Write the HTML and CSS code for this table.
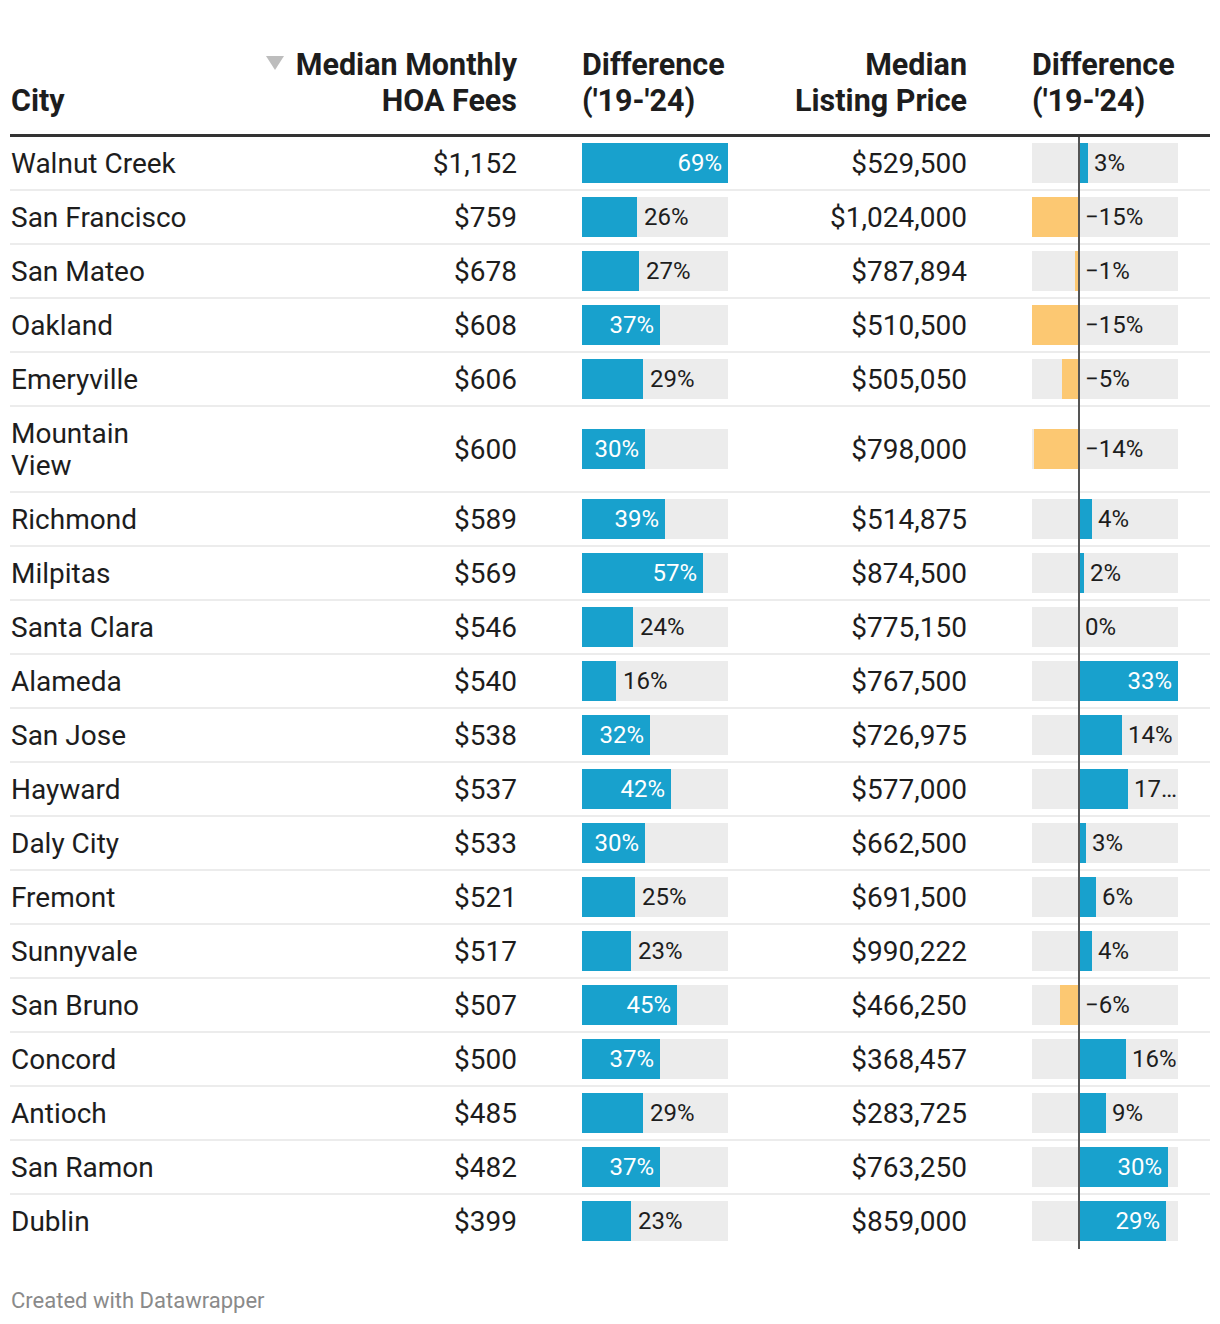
FILE: index.html
```html
<!DOCTYPE html>
<html>
<head>
<meta charset="utf-8">
<link rel="stylesheet" href="styles.css">
</head>
<body>
<div class="chart">
<table class="dw">
<colgroup><col class="c-city"><col class="c-hoa"><col class="c-bar"><col class="c-price"><col class="c-div"></colgroup>
<thead>
<tr>
<th class="th-city">City</th>
<th class="th-num"><svg class="sort" width="18" height="14" viewBox="0 0 18 14"><polygon points="0,0 18,0 9,14" fill="#bdbdbd"/></svg>Median Monthly<br>HOA Fees</th>
<th class="th-bar">Difference<br>('19-'24)</th>
<th class="th-num">Median<br>Listing Price</th>
<th class="th-bar">Difference<br>('19-'24)</th>
</tr>
</thead>
<tbody>
<tr><td class="city">Walnut Creek</td><td class="num">$1,152</td><td class="barcell"><div class="track"><div class="bar in" style="width:146px"><span class="lbl">69%</span></div></div></td><td class="num">$529,500</td><td class="divcell"><div class="track2"><div class="neg"></div><div class="pos"><div class="pbar" style="width:9px"></div><span class="lbl">3%</span></div></div></td></tr>
<tr><td class="city">San Francisco</td><td class="num">$759</td><td class="barcell"><div class="track"><div class="bar" style="width:55px"></div><span class="lbl">26%</span></div></td><td class="num">$1,024,000</td><td class="divcell"><div class="track2"><div class="neg"><div class="nbar" style="width:47px"></div></div><div class="pos"><span class="lbl">−15%</span></div></div></td></tr>
<tr><td class="city">San Mateo</td><td class="num">$678</td><td class="barcell"><div class="track"><div class="bar" style="width:57px"></div><span class="lbl">27%</span></div></td><td class="num">$787,894</td><td class="divcell"><div class="track2"><div class="neg"><div class="nbar" style="width:4px"></div></div><div class="pos"><span class="lbl">−1%</span></div></div></td></tr>
<tr><td class="city">Oakland</td><td class="num">$608</td><td class="barcell"><div class="track"><div class="bar in" style="width:78px"><span class="lbl">37%</span></div></div></td><td class="num">$510,500</td><td class="divcell"><div class="track2"><div class="neg"><div class="nbar" style="width:47px"></div></div><div class="pos"><span class="lbl">−15%</span></div></div></td></tr>
<tr><td class="city">Emeryville</td><td class="num">$606</td><td class="barcell"><div class="track"><div class="bar" style="width:61px"></div><span class="lbl">29%</span></div></td><td class="num">$505,050</td><td class="divcell"><div class="track2"><div class="neg"><div class="nbar" style="width:17px"></div></div><div class="pos"><span class="lbl">−5%</span></div></div></td></tr>
<tr><td class="city">Mountain View</td><td class="num">$600</td><td class="barcell"><div class="track"><div class="bar in" style="width:63px"><span class="lbl">30%</span></div></div></td><td class="num">$798,000</td><td class="divcell"><div class="track2"><div class="neg"><div class="nbar" style="width:45px"></div></div><div class="pos"><span class="lbl">−14%</span></div></div></td></tr>
<tr><td class="city">Richmond</td><td class="num">$589</td><td class="barcell"><div class="track"><div class="bar in" style="width:83px"><span class="lbl">39%</span></div></div></td><td class="num">$514,875</td><td class="divcell"><div class="track2"><div class="neg"></div><div class="pos"><div class="pbar" style="width:13px"></div><span class="lbl">4%</span></div></div></td></tr>
<tr><td class="city">Milpitas</td><td class="num">$569</td><td class="barcell"><div class="track"><div class="bar in" style="width:121px"><span class="lbl">57%</span></div></div></td><td class="num">$874,500</td><td class="divcell"><div class="track2"><div class="neg"></div><div class="pos"><div class="pbar" style="width:5px"></div><span class="lbl">2%</span></div></div></td></tr>
<tr><td class="city">Santa Clara</td><td class="num">$546</td><td class="barcell"><div class="track"><div class="bar" style="width:51px"></div><span class="lbl">24%</span></div></td><td class="num">$775,150</td><td class="divcell"><div class="track2"><div class="neg"></div><div class="pos"><span class="lbl">0%</span></div></div></td></tr>
<tr><td class="city">Alameda</td><td class="num">$540</td><td class="barcell"><div class="track"><div class="bar" style="width:34px"></div><span class="lbl">16%</span></div></td><td class="num">$767,500</td><td class="divcell"><div class="track2"><div class="neg"></div><div class="pos"><div class="pbar in" style="width:99px"><span class="lbl">33%</span></div></div></div></td></tr>
<tr><td class="city">San Jose</td><td class="num">$538</td><td class="barcell"><div class="track"><div class="bar in" style="width:68px"><span class="lbl">32%</span></div></div></td><td class="num">$726,975</td><td class="divcell"><div class="track2"><div class="neg"></div><div class="pos"><div class="pbar" style="width:43px"></div><span class="lbl">14%</span></div></div></td></tr>
<tr><td class="city">Hayward</td><td class="num">$537</td><td class="barcell"><div class="track"><div class="bar in" style="width:89px"><span class="lbl">42%</span></div></div></td><td class="num">$577,000</td><td class="divcell"><div class="track2"><div class="neg"></div><div class="pos"><div class="pbar" style="width:49px"></div><span class="lbl">17…</span></div></div></td></tr>
<tr><td class="city">Daly City</td><td class="num">$533</td><td class="barcell"><div class="track"><div class="bar in" style="width:63px"><span class="lbl">30%</span></div></div></td><td class="num">$662,500</td><td class="divcell"><div class="track2"><div class="neg"></div><div class="pos"><div class="pbar" style="width:7px"></div><span class="lbl">3%</span></div></div></td></tr>
<tr><td class="city">Fremont</td><td class="num">$521</td><td class="barcell"><div class="track"><div class="bar" style="width:53px"></div><span class="lbl">25%</span></div></td><td class="num">$691,500</td><td class="divcell"><div class="track2"><div class="neg"></div><div class="pos"><div class="pbar" style="width:17px"></div><span class="lbl">6%</span></div></div></td></tr>
<tr><td class="city">Sunnyvale</td><td class="num">$517</td><td class="barcell"><div class="track"><div class="bar" style="width:49px"></div><span class="lbl">23%</span></div></td><td class="num">$990,222</td><td class="divcell"><div class="track2"><div class="neg"></div><div class="pos"><div class="pbar" style="width:13px"></div><span class="lbl">4%</span></div></div></td></tr>
<tr><td class="city">San Bruno</td><td class="num">$507</td><td class="barcell"><div class="track"><div class="bar in" style="width:95px"><span class="lbl">45%</span></div></div></td><td class="num">$466,250</td><td class="divcell"><div class="track2"><div class="neg"><div class="nbar" style="width:19px"></div></div><div class="pos"><span class="lbl">−6%</span></div></div></td></tr>
<tr><td class="city">Concord</td><td class="num">$500</td><td class="barcell"><div class="track"><div class="bar in" style="width:78px"><span class="lbl">37%</span></div></div></td><td class="num">$368,457</td><td class="divcell"><div class="track2"><div class="neg"></div><div class="pos"><div class="pbar" style="width:47px"></div><span class="lbl">16%</span></div></div></td></tr>
<tr><td class="city">Antioch</td><td class="num">$485</td><td class="barcell"><div class="track"><div class="bar" style="width:61px"></div><span class="lbl">29%</span></div></td><td class="num">$283,725</td><td class="divcell"><div class="track2"><div class="neg"></div><div class="pos"><div class="pbar" style="width:27px"></div><span class="lbl">9%</span></div></div></td></tr>
<tr><td class="city">San Ramon</td><td class="num">$482</td><td class="barcell"><div class="track"><div class="bar in" style="width:78px"><span class="lbl">37%</span></div></div></td><td class="num">$763,250</td><td class="divcell"><div class="track2"><div class="neg"></div><div class="pos"><div class="pbar in" style="width:89px"><span class="lbl">30%</span></div></div></div></td></tr>
<tr><td class="city">Dublin</td><td class="num">$399</td><td class="barcell"><div class="track"><div class="bar" style="width:49px"></div><span class="lbl">23%</span></div></td><td class="num">$859,000</td><td class="divcell"><div class="track2"><div class="neg"></div><div class="pos"><div class="pbar in" style="width:87px"><span class="lbl">29%</span></div></div></div></td></tr>
</tbody>
</table>
<div class="footer">Created with Datawrapper</div>
</div>
</body>
</html>
```
FILE: styles.css
```css
* { box-sizing: border-box; }
html, body { margin: 0; padding: 0; background: #fff; }
body { font-family: Roboto, "Liberation Sans", sans-serif; color: #1d1d1d; }
.chart { padding: 40px 10px 0 10px; }
.dw { width: 1200px; border-collapse: collapse; table-layout: fixed; }
.c-city { width: 200px; }
.c-hoa { width: 315px; }
.c-bar { width: 235px; }
.c-price { width: 215px; }
.c-div { width: 235px; }
th { font-weight: 700; font-size: 30.5px; line-height: 36px; padding: 7px 8px 15px 8px; vertical-align: bottom; border-bottom: 3px solid #333; color: #1d1d1d; }
.th-city { text-align: left; padding-left: 1px; }
.th-num { text-align: right; }
.th-bar { text-align: left; padding-left: 57px; }
.sort { margin-right: 12px; vertical-align: 5px; }
td { font-size: 28px; line-height: 32px; padding: 11px 8px 9px 8px; border-bottom: 2px solid #ececec; vertical-align: middle; }
tbody tr:last-child td { border-bottom: none; }
.city { text-align: left; padding-left: 1px; padding-right: 20px; }
.num { text-align: right; }
.barcell { padding: 6px 32px 6px 57px; }
.divcell { padding: 6px 32px 6px 57px; position: relative; }
.divcell::after { content: ""; position: absolute; left: 103px; top: 0; bottom: -2px; width: 2px; background: #555; }
.track { width: 146px; height: 40px; background: #ececec; display: flex; align-items: center; }
.bar { height: 40px; background: #18a1cd; flex: none; display: flex; align-items: center; justify-content: flex-end; }
.lbl { font-size: 24px; line-height: 40px; padding-left: 7px; white-space: nowrap; color: #1d1d1d; }
.in .lbl { color: #fff; padding-left: 0; padding-right: 6px; }
.track2 { width: 146px; height: 40px; background: #ececec; display: flex; }
.neg { width: 47px; flex: none; display: flex; justify-content: flex-end; }
.nbar { height: 40px; background: #fcc872; }
.pos { width: 99px; flex: none; display: flex; align-items: center; overflow: hidden; }
.pbar { height: 40px; background: #18a1cd; flex: none; display: flex; align-items: center; justify-content: flex-end; }
.pos > .lbl { padding-left: 6px; }
.footer { font-size: 22px; color: #8a8a8a; padding: 40px 0 0 1px; line-height: 28px; }
```
